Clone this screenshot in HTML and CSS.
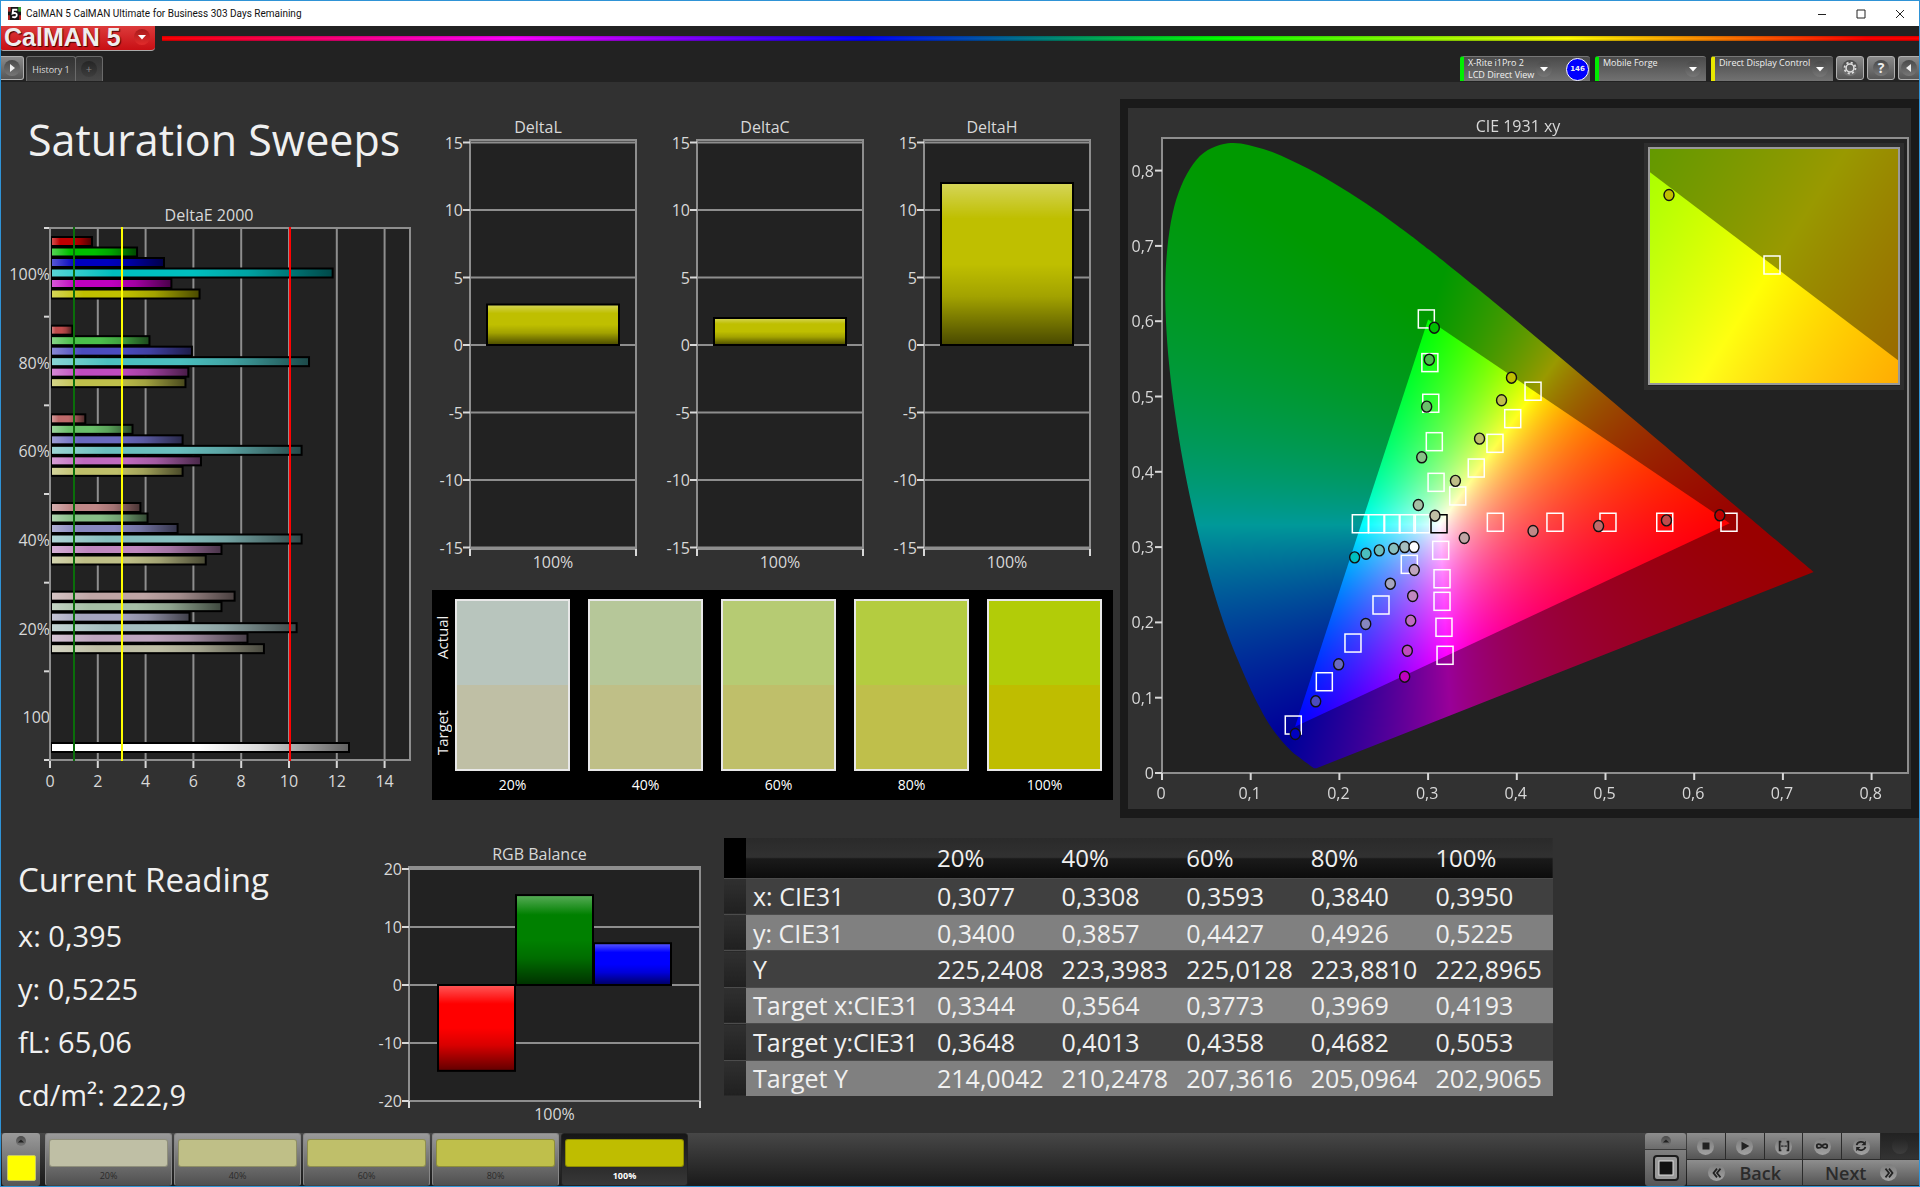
FILE: index.html
```html
<!DOCTYPE html>
<html lang="en">
<head>
  <meta charset="UTF-8">
  <meta name="viewport" content="width=device-width, initial-scale=1.0">
  <title>CalMAN 5 CalMAN Ultimate for Business</title>
  <link rel="stylesheet" href="styles.css">
</head>
<body>
  <div class="titlebar">
    <svg class="app-icon" viewBox="0 0 14 14" aria-hidden="true">
      <rect width="14" height="14" fill="#151515"/>
      <path d="M0 0h3v5H0z" fill="#a33"/><path d="M11 0h3v5h-3z" fill="#393"/><path d="M0 9h2v5H0zM12 9h2v5h-2z" fill="#b22"/>
      <path d="M10 3H5.500L5 7c2-1 4.500-.6 4.500 1.700S7 11.500 4.500 10.500" fill="none" stroke="#fff" stroke-width="2"/>
    </svg>
    <span class="titlebar-text">CalMAN 5 CalMAN Ultimate for Business 303 Days Remaining</span>
    <button class="win-btn" aria-label="Minimize"><svg viewBox="0 0 10 10"><path d="M1 5.500h8"/></svg></button>
    <button class="win-btn" aria-label="Maximize"><svg viewBox="0 0 10 10"><path d="M1 1h8v8H1z"/></svg></button>
    <button class="win-btn" aria-label="Close"><svg viewBox="0 0 10 10"><path d="M1 1l8 8M9 1L1 9"/></svg></button>
  </div>

  <header class="header">
    <div class="brand-row">
      <button class="brand">
        <span class="brand-name">CalMAN 5</span>
        <span class="knob knob-red"><svg viewBox="0 0 10 10"><path d="M1 3h8L5 7.500z"/></svg></span>
      </button>
      <div class="rainbow"></div>
    </div>
    <div class="tab-row">
      <button class="square-btn play" aria-label="Show workflow"><span class="knob"><svg viewBox="0 0 10 10"><path d="M3 1l5 4-5 4z"/></svg></span></button>
      <button class="tab">History 1</button>
      <button class="tab tab-add" aria-label="Add history"><span class="knob knob-dim">+</span></button>
      <div class="spacer"></div>
      <div class="device meter">
        <button class="device-btn">X-Rite i1Pro 2<br>LCD Direct View</button>
        <span class="knob"><svg viewBox="0 0 10 10"><path d="M1 3h8L5 7.500z"/></svg></span>
        <span class="badge">146</span>
      </div>
      <div class="device source">
        <select aria-label="Source"><option>Mobile Forge</option></select>
        <span class="knob"><svg viewBox="0 0 10 10"><path d="M1 3h8L5 7.500z"/></svg></span>
      </div>
      <div class="device display">
        <select aria-label="Display"><option>Direct Display Control</option></select>
        <span class="knob"><svg viewBox="0 0 10 10"><path d="M1 3h8L5 7.500z"/></svg></span>
      </div>
      <button class="square-btn" aria-label="Settings"><span class="knob"><svg viewBox="0 0 16 16"><circle cx="8" cy="8" r="4.500" fill="none" stroke="#ddd" stroke-width="1.800"/><circle cx="8" cy="8" r="6.300" fill="none" stroke="#ddd" stroke-width="2" stroke-dasharray="2.400 2.550"/></svg></span></button>
      <button class="square-btn help" aria-label="Help"><span class="knob">?</span></button>
      <button class="square-btn collapse" aria-label="Collapse"><span class="knob"><svg viewBox="0 0 10 10"><path d="M7 1L2 5l5 4z"/></svg></span></button>
    </div>
  </header>

  <main>
    <section class="upper">
      <div class="sweep">
        <h1>Saturation Sweeps</h1>
        <svg id="deltaE" class="chart" viewBox="1 200 430 605" role="img" aria-label="DeltaE 2000"></svg>
      </div>

      <div class="middle">
        <div class="deltas">
          <svg id="deltaL" class="chart" viewBox="431 110 227 470" role="img" aria-label="DeltaL"></svg>
          <svg id="deltaC" class="chart" viewBox="431 110 227 470" role="img" aria-label="DeltaC"></svg>
          <svg id="deltaH" class="chart" viewBox="431 110 227 470" role="img" aria-label="DeltaH"></svg>
        </div>
        <div class="compare">
          <div class="compare-side"><span>Actual</span><span>Target</span></div>
          <figure class="pair p20"><div class="pair-box"></div><figcaption>20%</figcaption></figure>
          <figure class="pair p40"><div class="pair-box"></div><figcaption>40%</figcaption></figure>
          <figure class="pair p60"><div class="pair-box"></div><figcaption>60%</figcaption></figure>
          <figure class="pair p80"><div class="pair-box"></div><figcaption>80%</figcaption></figure>
          <figure class="pair p100"><div class="pair-box"></div><figcaption>100%</figcaption></figure>
        </div>
      </div>

      <div class="cie">
        <canvas id="gamut" width="783" height="701"></canvas>
        <svg id="cie" class="chart" viewBox="1128 108 783 701" role="img" aria-label="CIE 1931 xy"></svg>
      </div>
    </section>

    <section class="lower">
      <div class="reading">
        <h2>Current Reading</h2>
        <p>x: 0,395</p>
        <p>y: 0,5225</p>
        <p>fL: 65,06</p>
        <p>cd/m²: 222,9</p>
      </div>
      <svg id="balance" class="chart balance" viewBox="371 840 352 290" role="img" aria-label="RGB Balance"></svg>
      <table class="data">
        <thead>
          <tr><td class="mark"></td><th></th><th>20%</th><th>40%</th><th>60%</th><th>80%</th><th>100%</th></tr>
        </thead>
        <tbody>
          <tr><td class="mark"></td><th>x: CIE31</th><td>0,3077</td><td>0,3308</td><td>0,3593</td><td>0,3840</td><td>0,3950</td></tr>
          <tr><td class="mark"></td><th>y: CIE31</th><td>0,3400</td><td>0,3857</td><td>0,4427</td><td>0,4926</td><td>0,5225</td></tr>
          <tr><td class="mark"></td><th>Y</th><td>225,2408</td><td>223,3983</td><td>225,0128</td><td>223,8810</td><td>222,8965</td></tr>
          <tr><td class="mark"></td><th>Target x:CIE31</th><td>0,3344</td><td>0,3564</td><td>0,3773</td><td>0,3969</td><td>0,4193</td></tr>
          <tr><td class="mark"></td><th>Target y:CIE31</th><td>0,3648</td><td>0,4013</td><td>0,4358</td><td>0,4682</td><td>0,5053</td></tr>
          <tr><td class="mark"></td><th>Target Y</th><td>214,0042</td><td>210,2478</td><td>207,3616</td><td>205,0964</td><td>202,9065</td></tr>
        </tbody>
      </table>
    </section>
  </main>

  <footer class="footer">
    <button class="picker" aria-label="Pattern colour">
      <span class="knob knob-small"><svg viewBox="0 0 10 10"><path d="M1 7h8L5 3z"/></svg></span>
      <span class="picker-color"></span>
    </button>
    <div class="steps">
      <button class="step s20"><span></span>20%</button>
      <button class="step s40"><span></span>40%</button>
      <button class="step s60"><span></span>60%</button>
      <button class="step s80"><span></span>80%</button>
      <button class="step s100 active"><span></span>100%</button>
    </div>
    <div class="spacer"></div>
    <div class="window-ctl">
      <button class="ctl-up" aria-label="Expand"><span class="knob knob-small"><svg viewBox="0 0 10 10"><path d="M1 7h8L5 3z"/></svg></span></button>
      <button class="ctl-pattern" aria-label="Pattern window">
        <svg viewBox="0 0 28 28"><rect x="2" y="2" width="24" height="24" rx="3" fill="#999" stroke="#1c1c1c" stroke-width="2"/><rect x="7" y="7" width="14" height="14" fill="#111" stroke="#ddd"/></svg>
      </button>
    </div>
    <div class="transport">
      <button aria-label="Stop"><span class="knob knob-light"><svg viewBox="0 0 16 16"><path d="M4 4h8v8H4z"/></svg></span></button>
      <button aria-label="Play"><span class="knob knob-light"><svg viewBox="0 0 16 16"><path d="M4 3l9 5-9 5z"/></svg></span></button>
      <button aria-label="Read series"><span class="knob knob-light"><svg viewBox="0 0 16 16"><path class="line" d="M5 3H3v10h2M11 3h2v10h-2M5 8h1.500M7.500 8h1M9.500 8H11"/></svg></span></button>
      <button aria-label="Continuous"><span class="knob knob-light"><svg viewBox="0 0 16 16"><path class="line" d="M8 8C6 5 2 5 2 8s4 3 6 0 6-3 6 0-4 3-6 0z"/></svg></span></button>
      <button aria-label="Refresh"><span class="knob knob-light"><svg viewBox="0 0 16 16"><path class="line" d="M3 7c1-4 7-5 9-2M13 9c-1 4-7 5-9 2"/><path d="M13.500 2v5h-5zM2.500 14V9h5z"/></svg></span></button>
      <button class="off" aria-label="Record" disabled><span class="knob knob-dim"></span></button>
      <button class="nav"><span class="knob knob-light"><svg viewBox="0 0 16 16"><path class="line" d="M8 3L4 8l4 5M12 3L8 8l4 5"/></svg></span>Back</button>
      <button class="nav">Next<span class="knob knob-light"><svg viewBox="0 0 16 16"><path class="line" d="M4 3l4 5-4 5M8 3l4 5-4 5"/></svg></span></button>
    </div>
  </footer>

  <script src="charts.js"></script>
</body>
</html>
```
FILE: styles.css
```css
* {
  margin: 0;
  padding: 0;
  box-sizing: border-box;
}

body {
  display: flex;
  flex-direction: column;
  min-height: 100vh;
  border: 1px solid #2f93d6;
  background: #313131;
  color: #f0f0f0;
  font-family: "Open Sans", "Noto Sans", sans-serif;
  font-size: 16px;
}

button,
select {
  border: none;
  background: none;
  color: inherit;
  font-family: inherit;
}

svg {
  display: block;
}

.spacer {
  flex: 1;
}

/* window title */
.titlebar {
  display: flex;
  align-items: center;
  height: 25px;
  padding-left: 7px;
  background: #fff;
  color: #111;
  font-family: Roboto, sans-serif;
  font-size: 10px;
}

.app-icon {
  width: 13px;
  height: 13px;
}

.titlebar-text {
  flex: 1;
  margin-left: 5px;
}

.win-btn {
  display: grid;
  place-items: center;
  width: 39px;
  height: 25px;
}

.win-btn svg {
  width: 10px;
  height: 10px;
  fill: none;
  stroke: #222;
}

/* header */
.header {
  background: #222;
}

.brand-row {
  display: flex;
  align-items: flex-start;
  height: 30px;
}

.brand {
  display: flex;
  align-items: center;
  gap: 5px;
  width: 154px;
  height: 25px;
  padding: 0 5px 2px 3px;
  border-bottom: 1px solid #aaa;
  border-radius: 0 0 4px 2px;
  background: linear-gradient(#dc3b3b, #c80f14);
}

.brand-name {
  flex: 1;
  color: #eee;
  font: bold 25px/20px "Liberation Sans", sans-serif;
  text-align: left;
  text-shadow: 1px 1px 1px #400;
  white-space: nowrap;
}

.rainbow {
  flex: 1;
  height: 5px;
  margin: 10px 0 0 7px;
  background: linear-gradient(rgba(0, 0, 0, 0.2), transparent 40%, transparent 60%, rgba(0, 0, 0, 0.3)),
    linear-gradient(90deg, #f00, #f0f 20%, #00f 40%, #0f0 60%, #ff0 80%, #f00 97%);
}

.tab-row {
  display: flex;
  gap: 3px;
  height: 26px;
}

.knob {
  display: grid;
  flex: none;
  place-items: center;
  width: 16px;
  height: 16px;
  border-radius: 50%;
  background: linear-gradient(#4a4a4a, #777);
  color: #fff;
}

.knob svg {
  width: 10px;
  height: 10px;
  fill: currentColor;
}

.knob-red {
  background: linear-gradient(#a81c1c, #e22a2a);
}

.knob-dim {
  background: linear-gradient(#252525, #3d3d3d);
  color: #888;
  line-height: 16px;
}

.knob-small {
  width: 10px;
  height: 10px;
  color: #222;
}

.knob-small svg {
  width: 8px;
  height: 8px;
}

.square-btn {
  display: grid;
  place-items: center;
  width: 28px;
  height: 24px;
  border: 1px solid #b0b0b0;
  border-radius: 3px;
  background: linear-gradient(#8a8a8a, #565656);
}

.square-btn .knob {
  color: #eee;
  font-size: 14px;
  font-weight: bold;
  line-height: 16px;
}

.square-btn[aria-label="Settings"] svg {
  width: 14px;
  height: 14px;
}

.square-btn.play {
  width: 23px;
  border-left: none;
  border-radius: 0 3px 3px 0;
}

.square-btn.collapse {
  width: 21px;
  border-right: none;
  border-radius: 3px 0 0 3px;
}

.tab {
  width: 50px;
  height: 25px;
  margin-left: -1px;
  border: 1px solid #6a6a6a;
  border-bottom: none;
  border-radius: 3px 3px 0 0;
  background: linear-gradient(#333, #484848);
  color: #ddd;
  font-size: 9px;
  white-space: nowrap;
}

.tab-add {
  display: grid;
  place-items: center;
  width: 28px;
  margin-left: -4px;
  font-size: 11px;
}

.device {
  display: flex;
  align-items: center;
  height: 25px;
  padding-right: 5px;
  border-top: 1px solid #777;
  border-left: 4px solid #0e0;
  border-radius: 3px 3px 0 0;
  background: linear-gradient(#4a4a4a, #727272);
}

.device select,
.device-btn {
  flex: 1;
  height: 25px;
  padding: 0 0 0 4px;
  appearance: none;
  font-size: 9px;
  line-height: 12px;
  text-align: left;
  white-space: nowrap;
}

.device select {
  padding-bottom: 12px;
}

.device option {
  background: #444;
}

.meter {
  width: 130px;
  padding-right: 1px;
}

.source {
  width: 111px;
  margin-left: 2px;
}

.display {
  width: 122px;
  margin-left: 2px;
  border-left-color: #e8e800;
}

.badge {
  width: 23px;
  height: 23px;
  margin-left: 14px;
  border: 1px solid #fff;
  border-radius: 50%;
  background: #00f;
  font: bold 7px/21px "DejaVu Sans", sans-serif;
  text-align: center;
}

/* main area */
main {
  flex: 1;
}

.upper {
  display: grid;
  grid-template-columns: 430fr 688fr 800fr;
  align-items: start;
}

h1 {
  padding: 28px 0 30px 27px;
  font-size: 43px;
  font-weight: 400;
  line-height: 60px;
  white-space: nowrap;
}

.chart {
  display: block;
  width: 100%;
}

.chart text {
  fill: #d8d8d8;
  font-size: 16px;
}

.deltas {
  display: grid;
  grid-template-columns: repeat(3, 1fr);
  padding: 28px 7px 0 0;
}

.compare {
  display: flex;
  gap: 18px;
  height: 210px;
  margin: 10px 6px 0 1px;
  padding: 9px 11px 0 1px;
  background: #000;
}

.compare-side {
  display: flex;
  flex-direction: row-reverse;
  width: 18px;
  height: 190px;
  margin: -9px -14px 0 0;
  writing-mode: vertical-rl;
  font-size: 15px;
  line-height: 18px;
  transform: rotate(180deg);
}

.compare-side span {
  flex: 1;
  text-align: center;
}

.pair {
  flex: 1;
}

.pair-box {
  height: 172px;
  border: 2px solid #e8e8e8;
  background: linear-gradient(var(--actual) 50%, var(--target) 50%);
}

.pair figcaption {
  margin-top: 4px;
  color: #fff;
  font-size: 14px;
  line-height: 19px;
  text-align: center;
}

.p20 { --actual: #b8c5bd; --target: #bfbfa5; }
.p40 { --actual: #b6c799; --target: #bfbf87; }
.p60 { --actual: #b6cb73; --target: #bfbf6a; }
.p80 { --actual: #b4cc40; --target: #bfbf4b; }
.p100 { --actual: #b2cc08; --target: #bfbd00; }

.cie {
  display: grid;
  margin: 17px 0 0 1px;
  border: 9px solid #1a1a1a;
  border-width: 9px 8px;
}

.cie canvas,
.cie svg {
  grid-area: 1 / 1;
  width: 100%;
}

/* lower area */
.lower {
  display: grid;
  grid-template-columns: 371fr 352fr 829fr 366fr;
  align-items: start;
}

.reading {
  padding: 38px 0 0 17px;
}

.reading h2 {
  margin-bottom: 5px;
  font-size: 33px;
  font-weight: 400;
  line-height: 48px;
}

.reading p {
  font-size: 29px;
  line-height: 53px;
}

.balance {
  margin-top: 22px;
}

.data {
  width: 100%;
  height: 258px;
  margin-top: 20px;
  border-collapse: collapse;
  table-layout: fixed;
  font-size: 25px;
  line-height: 32px;
}

.data th,
.data td {
  padding: 0 0 0 7px;
  font-weight: 400;
  text-align: left;
  white-space: nowrap;
}

.data th:nth-child(2) {
  width: 184px;
}

.data .mark {
  width: 22px;
  background: linear-gradient(#303030, #202020);
}

.data thead tr {
  height: 40px;
  background: linear-gradient(#2a2a2a, #313131 48%, #1a1a1a 52%, #0c0c0c);
  font-size: 24px;
}

.data thead .mark {
  background: #000;
}

.data tbody tr {
  border-top: 1px solid #4c4c4c;
  background: #404040;
}

.data tbody tr:nth-child(even) {
  background: #808080;
}

/* bottom bar */
.footer {
  display: flex;
  height: 53px;
  background: linear-gradient(#474747, #1a1a1a);
  color: #2b2b2b;
}

.picker {
  display: flex;
  flex-direction: column;
  align-items: center;
  justify-content: space-between;
  width: 38px;
  margin-left: 1px;
  padding: 3px 0 5px;
  border-radius: 3px;
  background: linear-gradient(#9a9a9a, #555);
}

.picker-color {
  width: 29px;
  height: 26px;
  border: 1px solid #c8c864;
  border-radius: 2px;
  background: #ff0;
}

.steps {
  display: flex;
  gap: 2px;
  margin-left: 5px;
}

.step {
  display: flex;
  flex-direction: column;
  align-items: center;
  width: 127px;
  padding-top: 5px;
  border: 1px solid #888;
  border-bottom-color: #444;
  border-radius: 3px;
  background: linear-gradient(#9a9a9a, #505050);
  font-size: 9px;
  line-height: 18px;
}

.step span {
  width: 119px;
  height: 30px;
  border: 1px solid rgba(0, 0, 0, 0.25);
  border-radius: 3px;
}

.step.active {
  border-color: #222;
  background: linear-gradient(#161616, #383838);
  color: #fff;
  font-weight: bold;
}

.s20 span { background: #bfbfa5; }
.s40 span { background: #bfbf87; }
.s60 span { background: #bfbf6a; }
.s80 span { background: #bfbf4b; }
.s100 span { background: #bfbd00; }

.window-ctl {
  display: flex;
  flex-direction: column;
  gap: 1px;
  width: 41px;
}

.window-ctl button {
  display: grid;
  place-items: center;
  border-radius: 3px 3px 0 0;
  background: linear-gradient(#8e8e8e, #6c6c6c);
}

.ctl-up {
  height: 16px;
}

.window-ctl .ctl-pattern {
  flex: 1;
  border-radius: 0 0 3px 3px;
  background: linear-gradient(#808080, #565656);
}

.ctl-pattern svg {
  width: 28px;
  height: 28px;
}

.transport {
  display: grid;
  grid-template-columns: repeat(6, 1fr);
  grid-template-rows: 26px 25px;
  gap: 1px;
  width: 232px;
  margin-left: 1px;
  background: #2c2c2c;
}

.transport button {
  display: grid;
  place-items: center;
  background: linear-gradient(#8e8e8e, #555);
  color: #2b2b2b;
}

.transport .off {
  background: linear-gradient(#222, #333);
}

.transport .nav {
  display: flex;
  grid-column: span 3;
  align-items: center;
  justify-content: center;
  gap: 14px;
  font-size: 18px;
  font-weight: 600;
  line-height: 24px;
}

.knob-light {
  width: 17px;
  height: 17px;
  background: linear-gradient(#7c7c7c, #a2a2a2);
  color: #222;
}

.knob-light svg {
  width: 14px;
  height: 14px;
}

.knob-light .line {
  fill: none;
  stroke: currentColor;
  stroke-width: 2;
}
```
FILE: charts.js
```javascript
const SVG = 'http://www.w3.org/2000/svg';

function add(parent, name, attrs, text) {
  const el = document.createElementNS(SVG, name);
  for (const key in attrs) el.setAttribute(key, attrs[key]);
  if (text !== undefined) el.textContent = text;
  parent.appendChild(el);
  return el;
}

function line(svg, x1, y1, x2, y2, stroke = '#8e8e8e', width = 2) {
  add(svg, 'line', { x1, y1, x2, y2, stroke, 'stroke-width': width });
}

function label(svg, x, y, text, anchor = 'middle') {
  add(svg, 'text', { x, y, 'text-anchor': anchor }, text);
}

// light to dark sheen laid over every bar
function addSheen(svg, vertical) {
  const grad = add(add(svg, 'defs', {}), 'linearGradient', {
    id: svg.id + 'Sheen', x1: 0, y1: 0, x2: vertical ? 0 : 1, y2: vertical ? 1 : 0
  });
  [[0, '#fff', 0.35], [0.22, '#fff', 0], [0.5, '#000', 0], [0.7, '#000', 0.15], [1, '#000', 0.62]].forEach(s => {
    add(grad, 'stop', { offset: s[0], 'stop-color': s[1], 'stop-opacity': s[2] });
  });
}

function bar(svg, x, y, width, height, fill) {
  add(svg, 'rect', { x, y, width, height, fill });
  add(svg, 'rect', { x, y, width, height, fill: `url(#${svg.id}Sheen)`, stroke: '#000', 'stroke-width': 2 });
}

// levels 100% to 20%, each red, green, blue, cyan, magenta, yellow
const sweep = [
  ['100%', 0, [1.76, 3.65, 4.78, 11.85, 5.09, 6.27]],
  ['80%', 75, [0.94, 4.17, 5.95, 10.86, 5.8, 5.68]],
  ['60%', 106, [1.48, 3.46, 5.56, 10.55, 6.33, 5.56]],
  ['40%', 135, [3.79, 4.09, 5.35, 10.55, 7.19, 6.53]],
  ['20%', 165, [7.74, 7.19, 5.85, 10.34, 8.28, 8.97]],
  ['100', 255, []]
];
const hues = ['100', '010', '001', '011', '101', '110'];

function hueColor(hue, low) {
  return 'rgb(' + [...hue].map(c => (c === '1' ? 191 : low)).join() + ')';
}

function drawDeltaE() {
  const svg = document.getElementById('deltaE');
  const left = 50, right = 410, top = 228, bottom = 760;
  const px = v => left + v * 23.9;
  const step = (bottom - top) / 6;
  addSheen(svg, false);
  label(svg, 209, 221, 'DeltaE 2000');
  add(svg, 'rect', { x: left, y: top, width: right - left, height: bottom - top, fill: '#222' });
  for (let v = 0; v <= 14; v += 2) {
    line(svg, px(v), top, px(v), bottom);
    line(svg, px(v), bottom, px(v), bottom + 8, '#d8d8d8');
    label(svg, px(v), 787, v);
  }
  sweep.forEach(([name, low, values], i) => {
    const y = top + i * step;
    line(svg, 44, y, left, y, '#d8d8d8');
    label(svg, 50, y + 52, name, 'end');
    values.forEach((v, k) => {
      bar(svg, left + 1, y + 9 + k * 10.5, v * 23.85 - 1, 9, hueColor(hues[k], low));
    });
  });
  line(svg, 44, bottom, left, bottom, '#d8d8d8');
  bar(svg, left + 1, 743, 298, 9, '#fff');
  add(svg, 'rect', { x: left, y: top, width: right - left, height: bottom - top, fill: 'none', stroke: '#8e8e8e', 'stroke-width': 2 });
  line(svg, 74, top - 1, 74, bottom + 1, '#0a6e0a');
  line(svg, 122, top - 1, 122, bottom + 1, '#ffff00');
  line(svg, 290, top - 1, 290, bottom + 1, '#ff0000');
}

// column chart with a symmetric value axis; frame = [left, top, right, bottom]
function drawColumns(id, title, frame, zero, unit, ticks, bars) {
  const svg = document.getElementById(id);
  const [left, top, right, bottom] = frame;
  addSheen(svg, true);
  label(svg, (left + right) / 2 - 15, top - 7, title);
  add(svg, 'rect', { x: left, y: top, width: right - left, height: bottom - top, fill: '#222', stroke: '#8e8e8e', 'stroke-width': 2 });
  ticks.forEach(v => {
    const y = zero - v * unit;
    line(svg, left, y, right, y);
    line(svg, left - 7, y, left, y, '#d8d8d8');
    label(svg, left - 7, y + 6, v, 'end');
  });
  line(svg, left, bottom, left, bottom + 7, '#d8d8d8');
  line(svg, right, bottom, right, bottom + 7, '#d8d8d8');
  label(svg, (left + right) / 2, bottom + 19, '100%');
  bars.forEach(([x, width, v, fill]) => {
    const h = Math.abs(v) * unit;
    bar(svg, x, v > 0 ? zero - h : zero, width, h, fill);
  });
}

// spectral locus
const locus = [
  [0.1741, 0.005], [0.1714, 0.0051], [0.1689, 0.0069], [0.1644, 0.0109], [0.1566, 0.0177], [0.144, 0.0297],
  [0.1241, 0.0578], [0.1096, 0.0868], [0.0913, 0.1327], [0.0687, 0.2007], [0.0454, 0.295], [0.0235, 0.4127],
  [0.0082, 0.5384], [0.0039, 0.6548], [0.0139, 0.7502], [0.0389, 0.812], [0.0743, 0.8338], [0.1142, 0.8262],
  [0.1547, 0.8059], [0.1929, 0.7816], [0.2296, 0.7543], [0.2658, 0.7243], [0.3016, 0.6923], [0.3731, 0.6245],
  [0.4441, 0.5547], [0.5125, 0.4866], [0.5752, 0.4242], [0.627, 0.3725], [0.6658, 0.334], [0.6915, 0.3083],
  [0.719, 0.2809], [0.7347, 0.2653]
];
const triangle = [[0.64, 0.33], [0.3, 0.6], [0.15, 0.06]];

function chromaColor(x, y, dim) {
  const X = x / y, Z = (1 - x - y) / y;
  const rgb = [
    3.2406 * X - 1.5372 - 0.4986 * Z,
    -0.9689 * X + 1.8758 + 0.0415 * Z,
    0.0557 * X - 0.204 + 1.057 * Z
  ].map(v => Math.max(v, 0));
  const max = Math.max(...rgb);
  return rgb.map(v => 255 * dim * v / max);
}

function shade(width, height, toXY, dim) {
  const canvas = document.createElement('canvas');
  canvas.width = width;
  canvas.height = height;
  const ctx = canvas.getContext('2d');
  const image = ctx.createImageData(width, height);
  for (let j = 0, p = 0; j < height; j++) {
    for (let i = 0; i < width; i++, p += 4) {
      const [x, y] = toXY(i, j);
      const c = chromaColor(x, Math.max(y, 0.001), dim);
      image.data[p] = c[0];
      image.data[p + 1] = c[1];
      image.data[p + 2] = c[2];
      image.data[p + 3] = 255;
    }
  }
  ctx.putImageData(image, 0, 0);
  return canvas;
}

// smooth curve through every point
function traceSpline(ctx, pts) {
  ctx.moveTo(...pts[0]);
  for (let i = 0; i < pts.length - 1; i++) {
    const a = pts[Math.max(i - 1, 0)], b = pts[i], c = pts[i + 1], d = pts[Math.min(i + 2, pts.length - 1)];
    ctx.bezierCurveTo(
      b[0] + (c[0] - a[0]) / 6, b[1] + (c[1] - a[1]) / 6,
      c[0] - (d[0] - b[0]) / 6, c[1] - (d[1] - b[1]) / 6,
      c[0], c[1]
    );
  }
}

function drawGamut() {
  const ctx = document.getElementById('gamut').getContext('2d');
  const main = { left: 34, top: 30, w: 746, h: 635, x0: 34, y0: 664, sx: 887, sy: 754 };
  const inset = { left: 521, top: 40, w: 251, h: 237, x0: 644.5 - 0.4193 * 4263, y0: 157 + 0.5053 * 4070, sx: 4263, sy: 4070 };

  ctx.fillStyle = '#222';
  ctx.fillRect(main.left, main.top, main.w, main.h);

  [main, inset].forEach(v => {
    const toPx = ([x, y]) => [v.x0 + x * v.sx, v.y0 - y * v.sy];
    const toXY = (i, j) => [(v.left + i - v.x0) / v.sx, (v.y0 - v.top - j) / v.sy];
    ctx.save();
    ctx.beginPath();
    ctx.rect(v.left, v.top, v.w, v.h);
    ctx.clip();

    ctx.save();
    ctx.beginPath();
    traceSpline(ctx, locus.map(toPx));
    ctx.closePath();
    ctx.clip();
    ctx.drawImage(shade(v.w, v.h, toXY, 0.6), v.left, v.top);
    ctx.restore();

    ctx.beginPath();
    triangle.map(toPx).forEach((p, i) => (i ? ctx.lineTo(...p) : ctx.moveTo(...p)));
    ctx.closePath();
    ctx.clip();
    ctx.drawImage(shade(v.w, v.h, toXY, 1), v.left, v.top);
    ctx.restore();
  });
}

const targets = [
  [0.298, 0.603], [0.302, 0.545], [0.303, 0.491], [0.307, 0.44], [0.309, 0.386],
  [0.2236, 0.331], [0.242, 0.331], [0.2593, 0.331], [0.2766, 0.331], [0.2931, 0.331],
  [0.4183, 0.507], [0.3954, 0.4706], [0.3754, 0.4378], [0.3543, 0.405], [0.3334, 0.3679],
  [0.6392, 0.333], [0.5668, 0.333], [0.5028, 0.333], [0.443, 0.333], [0.3758, 0.333],
  [0.3191, 0.1563], [0.3179, 0.1935], [0.3157, 0.228], [0.3157, 0.258], [0.3142, 0.2957],
  [0.148, 0.0637], [0.183, 0.1212], [0.2153, 0.1726], [0.2469, 0.2231], [0.2788, 0.2771]
];
// measured points, 100% to 20%
const measured = {
  '100': [[0.6289, 0.3422], [0.5687, 0.3355], [0.4922, 0.328], [0.4183, 0.3214], [0.3408, 0.3121]],
  '010': [[0.307, 0.5914], [0.3014, 0.5489], [0.2984, 0.4865], [0.2928, 0.4193], [0.289, 0.3559]],
  '001': [[0.1503, 0.0518], [0.1733, 0.0952], [0.1992, 0.1444], [0.2297, 0.1979], [0.2574, 0.2514]],
  '011': [[0.2172, 0.2864], [0.23, 0.2912], [0.245, 0.2957], [0.2612, 0.2979], [0.2736, 0.3001]],
  '101': [[0.2736, 0.1279], [0.2766, 0.1624], [0.2804, 0.2023], [0.2826, 0.2351], [0.2844, 0.2696]],
  '110': [[0.394, 0.525], [0.3828, 0.495], [0.358, 0.444], [0.3308, 0.388], [0.3077, 0.3417]]
};

function square(svg, x, y, stroke) {
  add(svg, 'rect', { x: x - 8, y: y - 9, width: 16, height: 18, fill: 'none', stroke, 'stroke-width': 1.5 });
}

function dot(svg, x, y, fill) {
  add(svg, 'ellipse', { cx: x, cy: y, rx: 5, ry: 5.5, fill, stroke: '#111', 'stroke-width': 1.4 });
}

function drawCie() {
  const svg = document.getElementById('cie');
  const px = v => 1162 + v * 887, py = v => 773 - v * 753;
  label(svg, 1518, 132, 'CIE 1931 xy');
  add(svg, 'rect', { x: 1162, y: 138, width: 746, height: 635, fill: 'none', stroke: '#8e8e8e', 'stroke-width': 2 });
  for (let i = 0; i <= 8; i++) {
    const text = i ? '0,' + i : '0';
    line(svg, px(i / 10), 773, px(i / 10), 780, '#d8d8d8');
    line(svg, 1155, py(i / 10), 1162, py(i / 10), '#d8d8d8');
    label(svg, px(i / 10) - 1, 799, text);
    label(svg, 1154, py(i / 10) + 6, text, 'end');
  }
  targets.forEach(([x, y]) => square(svg, px(x), py(y), '#fff'));
  square(svg, px(0.3123), py(0.331), '#000');
  for (const hue in measured) {
    measured[hue].forEach(([x, y], i) => dot(svg, px(x), py(y), hueColor(hue, sweep[i][1])));
  }
  dot(svg, px(0.2841), py(0.3001), '#fff');

  // zoomed view of the selected point
  add(svg, 'rect', { x: 1646, y: 145, width: 256, height: 243, fill: 'none', stroke: '#2e2e2e', 'stroke-width': 4 });
  add(svg, 'rect', { x: 1649, y: 148, width: 250, height: 236, fill: 'none', stroke: '#999', 'stroke-width': 2 });
  square(svg, 1772, 265, '#fff');
  dot(svg, 1669, 195, '#bfbf00');
}

drawDeltaE();
const deltaTicks = [15, 10, 5, 0, -5, -10, -15];
[['deltaL', 'DeltaL', 3], ['deltaC', 'DeltaC', 2], ['deltaH', 'DeltaH', 12]].forEach(([id, title, v]) => {
  drawColumns(id, title, [470, 140, 636, 549], 345, 13.5, deltaTicks, [[487, 132, v, '#bfbf00']]);
});
drawColumns('balance', 'RGB Balance', [408, 867, 699, 1101], 985, 5.8, [20, 10, 0, -10, -20], [
  [437, 77, -14.8, '#ff0000'], [515, 77, 15.5, '#008000'], [593, 77, 7.2, '#0000ff']
]);
drawGamut();
drawCie();
```
